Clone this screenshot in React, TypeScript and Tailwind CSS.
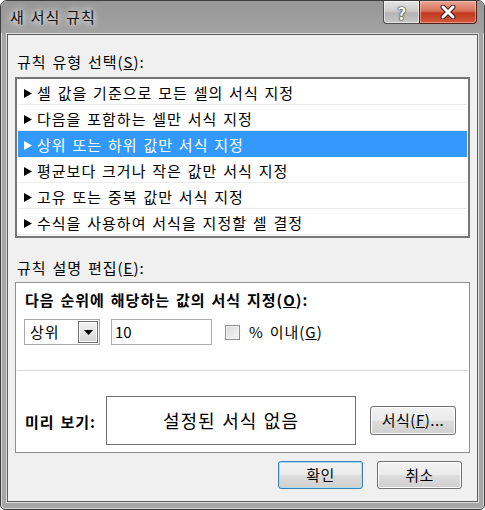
import React from "react";

const rules = [
  "셀 값을 기준으로 모든 셀의 서식 지정",
  "다음을 포함하는 셀만 서식 지정",
  "상위 또는 하위 값만 서식 지정",
  "평균보다 크거나 작은 값만 서식 지정",
  "고유 또는 중복 값만 서식 지정",
  "수식을 사용하여 서식을 지정할 셀 결정",
];

const Arrow = ({ white }: { white?: boolean }) => (
  <svg width="8" height="9" viewBox="0 0 8 9" className="shrink-0">
    <polygon points="0,0 8,4.5 0,9" fill={white ? "#ffffff" : "#000000"} />
  </svg>
);

const WinButton = ({
  children,
  isDefault,
  className,
}: {
  children: React.ReactNode;
  isDefault?: boolean;
  className: string;
}) => (
  <button
    className={`${className} flex items-center justify-center rounded-[3px] border text-[15px] text-black tracking-[0.5px] bg-[linear-gradient(#f2f2f2_0%,#ebebeb_48%,#dddddd_52%,#cfcfcf_100%)] ${
      isDefault
        ? "border-[#3c7fb1] shadow-[inset_0_0_0_1px_#a9dcf6]"
        : "border-[#707070] shadow-[inset_0_0_0_1px_#fcfcfc]"
    }`}
  >
    {children}
  </button>
);

export default function App() {
  return (
    <div className="w-[485px] h-[510px] flex flex-col rounded-t-[7px] rounded-b-[5px] border border-[#3e3e3e] bg-[#a6a6a6] shadow-[inset_0_0_0_1px_rgba(255,255,255,0.55)] font-['Noto_Sans_CJK_KR',sans-serif] text-black tracking-[1px] [word-spacing:1.5px] overflow-hidden">
      {/* 제목 표시줄 */}
      <div className="h-[32px] shrink-0 flex items-start justify-between bg-[linear-gradient(#979797,#a2a2a2)]">
        <div className="h-[32px] flex items-center pl-[9px] text-[15px] text-[#111] [text-shadow:0_0_6px_#ffffff,0_0_10px_rgba(255,255,255,0.8)]">
          새 서식 규칙
        </div>
        <div className="flex mr-[7px] tracking-normal">
          <div className="w-[36px] h-[23px] flex items-center justify-center rounded-bl-[4px] border border-t-0 border-r-0 border-[#4e4e4e] bg-[linear-gradient(#e4e4e4_0%,#cdcdcd_45%,#b3b3b3_55%,#c9c9c9_100%)] shadow-[inset_0_0_0_1px_rgba(255,255,255,0.5)]">
            <span className="text-[17px] font-bold leading-none text-white [text-shadow:0_0_1px_#333,0_0_1px_#333,0_0_2px_#333]">?</span>
          </div>
          <div className="w-[58px] h-[23px] flex items-center justify-center rounded-br-[4px] border border-t-0 border-[#4e2018] bg-[linear-gradient(#e9a491_0%,#d9735b_45%,#c2391e_55%,#d45a3e_100%)] shadow-[inset_0_0_0_1px_rgba(255,220,210,0.45)]">
            <svg width="18" height="14" viewBox="0 0 18 14">
              <path d="M4 2 L14 12 M14 2 L4 12" stroke="#3a1a14" strokeWidth="5" strokeLinecap="round" />
              <path d="M4 2 L14 12 M14 2 L4 12" stroke="#ffffff" strokeWidth="3" strokeLinecap="round" />
            </svg>
          </div>
        </div>
      </div>

      {/* 클라이언트 영역 */}
      <div className="flex-1 mx-[5px] mb-[6px] border border-[#dedede] flex">
        <div className="flex-1 border border-[#5c5c5c] bg-[#f0f0f0] px-[7px] pt-[17px] flex flex-col text-[15px]">
          <div className="h-[20px] leading-[20px] pl-[2px]">
            규칙 유형 선택(<span className="underline">S</span>):
          </div>

          <div className="mt-[5px] h-[161px] border-2 border-[#767676] bg-white px-[1px]">
            {rules.map((r, i) => (
              <div
                key={r}
                className={`h-[26px] flex items-center gap-[5px] pl-[6px] pt-[3px] border-b ${
                  i === 2
                    ? "bg-[#3399ff] text-white border-[#3399ff]"
                    : "border-[#ececec]"
                }`}
              >
                <Arrow white={i === 2} />
                <span>{r}</span>
              </div>
            ))}
          </div>

          <div className="mt-[20px] h-[20px] leading-[20px] pl-[2px]">
            규칙 설명 편집(<span className="underline">E</span>):
          </div>

          <div className="mt-[4px] h-[171px] border border-[#8e8f8f] bg-white flex flex-col">
            <div className="mt-[7px] h-[20px] leading-[20px] pl-[9px] font-bold">
              다음 순위에 해당하는 값의 서식 지정(<span className="underline">O</span>):
            </div>

            <div className="mt-[9px] h-[26px] flex items-center pl-[8px]">
              <div className="w-[76px] h-[26px] border border-[#a5a9ae] flex items-center justify-between pl-[5px] pr-[1px]">
                <span>상위</span>
                <div className="w-[20px] h-[22px] border border-[#6f6f6f] bg-[linear-gradient(#f3f3f3_0%,#e5e5e5_50%,#d4d4d4_100%)] shadow-[inset_0_0_0_1px_#fafafa] flex items-center justify-center">
                  <svg width="9" height="5" viewBox="0 0 9 5">
                    <polygon points="0,0 9,0 4.5,5" fill="#000" />
                  </svg>
                </div>
              </div>
              <div className="ml-[11px] w-[101px] h-[26px] border border-[#abadb3] flex items-center pl-[3px] tracking-normal">
                10
              </div>
              <div className="ml-[13px] w-[15px] h-[15px] border border-[#8f8f8f] bg-[linear-gradient(135deg,#d8d8d8,#f7f7f7)] shadow-[inset_0_0_0_1px_#f4f4f4]" />
              <span className="ml-[9px]">
                % 이내(<span className="underline">G</span>)
              </span>
            </div>

            <div className="mt-[25px] mx-[1px] h-px bg-[#d6d6d6]" />

            <div className="mt-[25px] flex items-center pl-[9px] pr-[13px]">
              <div className="w-[81px] font-bold pt-[3px]">미리 보기:</div>
              <div className="w-[250px] h-[49px] border border-[#6e6e6e] flex items-center justify-center text-[18px]">
                설정된 서식 없음
              </div>
              <WinButton className="ml-auto w-[86px] h-[29px]">
                서식(<span className="underline">F</span>)...
              </WinButton>
            </div>
          </div>

          <div className="mt-[8px] flex justify-end gap-[14px] pr-[8px]">
            <WinButton isDefault className="w-[85px] h-[28px]">
              확인
            </WinButton>
            <WinButton className="w-[85px] h-[28px]">취소</WinButton>
          </div>
        </div>
      </div>
    </div>
  );
}
